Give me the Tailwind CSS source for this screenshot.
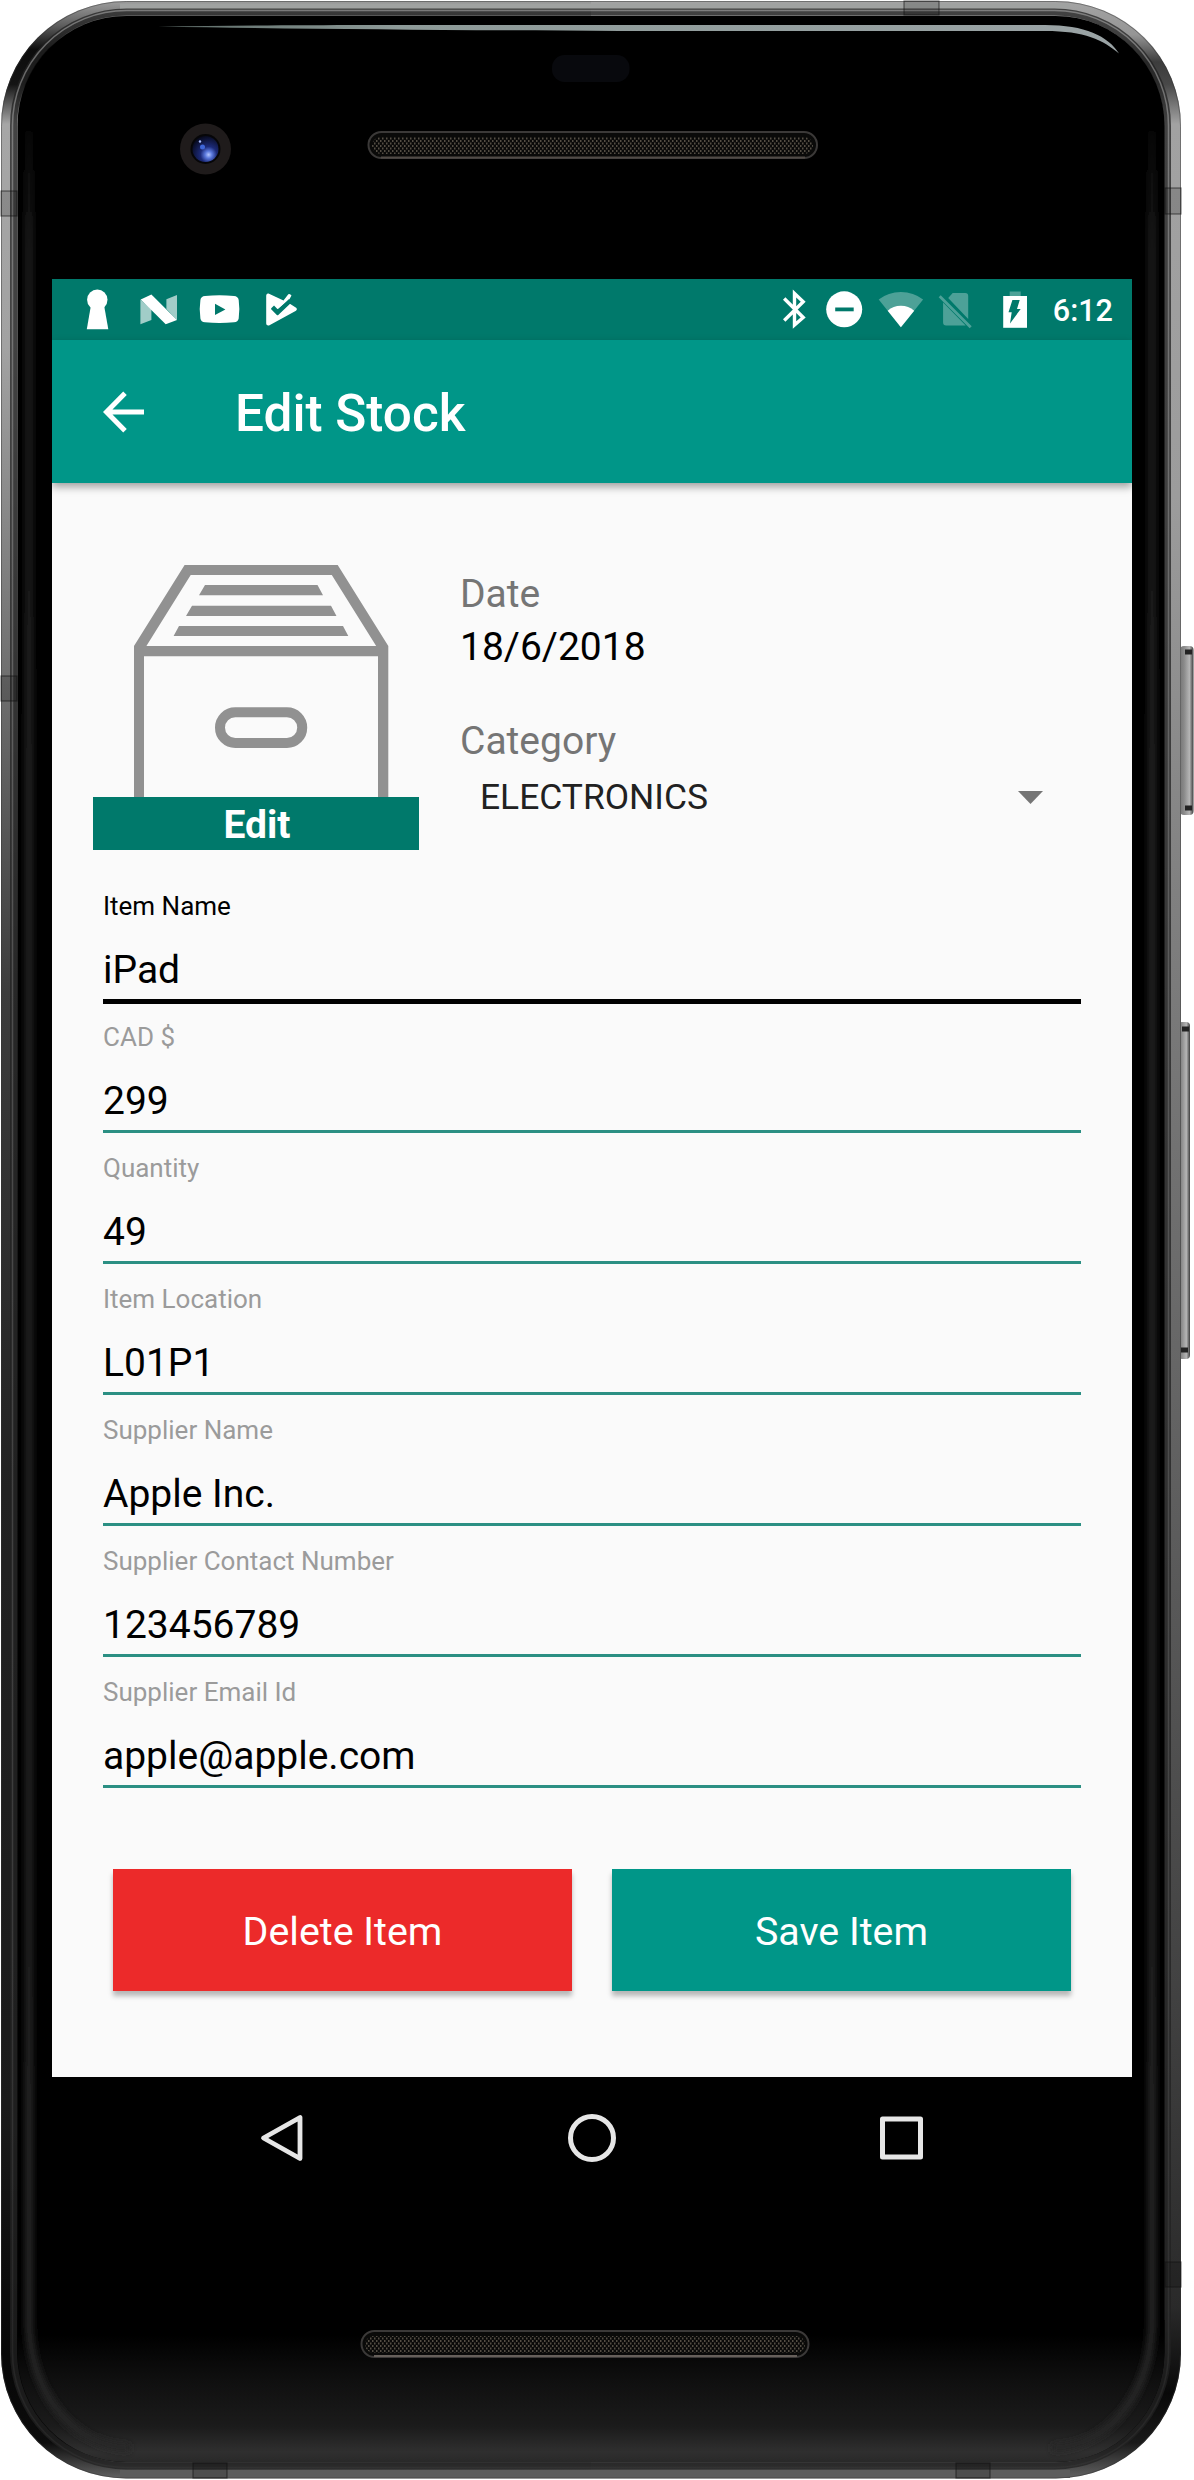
<!DOCTYPE html>
<html lang="en">
<head>
<meta charset="utf-8">
<title>Edit Stock</title>
<script src="https://cdn.jsdelivr.net/npm/@tailwindcss/browser@4"></script>
</head>
<body class="bg-white">
<div class="relative w-[1194px] h-[2480px] overflow-hidden font-[Roboto,sans-serif]">

  <!-- Handset body -->
  <svg class="absolute inset-0" width="1194" height="2480" viewBox="0 0 1194 2480" fill="none" aria-hidden="true">
    <defs>
      <linearGradient id="left" x1="0" y1="0" x2="0" y2="2480" gradientUnits="userSpaceOnUse">
        <stop offset="0" stop-color="#a0a0a0"/><stop offset=".01" stop-color="#606060"/><stop offset=".02" stop-color="#0c0c0c"/><stop offset=".034" stop-color="#141414"/><stop offset=".05" stop-color="#a6a6a6"/><stop offset=".14" stop-color="#a2a2a2"/><stop offset=".27" stop-color="#707070"/><stop offset=".4" stop-color="#3c3c3c"/><stop offset=".6" stop-color="#222"/><stop offset=".85" stop-color="#1a1a1a"/><stop offset=".95" stop-color="#060606"/><stop offset=".985" stop-color="#0c0c0c"/><stop offset="1" stop-color="#666"/>
      </linearGradient>
      <linearGradient id="right" x1="0" y1="0" x2="0" y2="2480" gradientUnits="userSpaceOnUse">
        <stop offset="0" stop-color="#a4a4a4"/><stop offset=".014" stop-color="#959595"/><stop offset=".025" stop-color="#3c3c3c"/><stop offset=".034" stop-color="#484848"/><stop offset=".05" stop-color="#a2a2a2"/><stop offset=".2" stop-color="#9c9c9c"/><stop offset=".36" stop-color="#808080"/><stop offset=".55" stop-color="#666"/><stop offset=".8" stop-color="#424242"/><stop offset=".93" stop-color="#2a2a2a"/><stop offset=".965" stop-color="#080808"/><stop offset=".985" stop-color="#1a1a1a"/><stop offset="1" stop-color="#666"/>
      </linearGradient>
      <linearGradient id="rim" x1="0" y1="0" x2="0" y2="2480" gradientUnits="userSpaceOnUse">
        <stop offset="0" stop-color="#bbb" stop-opacity=".5"/><stop offset=".4" stop-color="#999" stop-opacity=".35"/><stop offset=".8" stop-color="#777" stop-opacity=".3"/><stop offset="1" stop-color="#555" stop-opacity=".15"/>
      </linearGradient>
      <linearGradient id="glow" x1="0" y1="2335" x2="0" y2="2462" gradientUnits="userSpaceOnUse">
        <stop offset="0" stop-color="#000"/><stop offset=".35" stop-color="#0f0f0f"/><stop offset=".72" stop-color="#1b1b1b"/><stop offset=".92" stop-color="#2f2f2f"/><stop offset="1" stop-color="#292929"/>
      </linearGradient>
      <linearGradient id="edge" x1="0" y1="110" x2="0" y2="2400" gradientUnits="userSpaceOnUse">
        <stop offset="0" stop-color="#1e1e1e" stop-opacity="0"/><stop offset=".06" stop-color="#1e1e1e"/><stop offset="1" stop-color="#262626"/>
      </linearGradient>
      <linearGradient id="strip" x1="158" y1="0" x2="1119" y2="0" gradientUnits="userSpaceOnUse">
        <stop offset="0" stop-color="#5b6a66"/><stop offset=".25" stop-color="#8d9a98"/><stop offset="1" stop-color="#9aa3a5"/>
      </linearGradient>
      <linearGradient id="btn" x1="0" y1="0" x2="1" y2="0">
        <stop offset="0" stop-color="#777"/><stop offset=".3" stop-color="#8a8a8a"/><stop offset=".7" stop-color="#b5b5b5"/><stop offset="1" stop-color="#3d3d3d"/>
      </linearGradient>
      <radialGradient id="lens" cx=".62" cy=".72" r=".75">
        <stop offset="0" stop-color="#b4c6ff"/><stop offset=".18" stop-color="#5a78dc"/><stop offset=".42" stop-color="#1c2a78"/><stop offset="1" stop-color="#060818"/>
      </radialGradient>
      <pattern id="mesh" width="4" height="5" patternUnits="userSpaceOnUse">
        <rect width="4" height="5" fill="#0a0a09"/><rect x="0" y="0" width="1.5" height="2" fill="#544e44"/><rect x="2" y="2.5" width="1.5" height="2" fill="#544e44"/>
      </pattern>
      <filter id="soft" x="-10%" y="-10%" width="120%" height="120%"><feGaussianBlur stdDeviation="3"/></filter>
      <clipPath id="lh"><rect x="0" y="0" width="591" height="2480"/></clipPath>
      <clipPath id="rh"><rect x="591" y="0" width="603" height="2480"/></clipPath>
    </defs>
    <rect x="1180" y="646" width="13.5" height="169" rx="4" fill="url(#btn)"/>
    <path d="M1185 652h7M1185 808h7" stroke="#222" stroke-width="5"/>
    <rect x="1178" y="1022" width="12" height="337" rx="4" fill="url(#btn)"/>
    <path d="M1182 1029h7M1181 1350h7" stroke="#222" stroke-width="5"/>

    <rect x="1" y="1" width="1180" height="2477.500" rx="125" ry="125" fill="url(#left)" clip-path="url(#lh)"/>
    <rect x="1" y="1" width="1180" height="2477.500" rx="125" ry="125" fill="url(#right)" clip-path="url(#rh)"/>
    <path d="M120 6.500H1070" stroke="#a0a2a1" stroke-width="6"/>
    <path d="M120 2474H1070" stroke="#5c5c5c" stroke-width="8"/>
    <rect x="1.500" y="1.500" width="1179" height="2476.500" rx="125" ry="125" stroke="#333" stroke-opacity=".45"/>
    <rect x="13.500" y="12" width="1154" height="2454" rx="113" ry="114" stroke="#222" stroke-width="7" stroke-opacity=".75"/>
    <rect x="12.500" y="10.500" width="1156" height="2457" rx="114" ry="115" stroke="url(#rim)" stroke-width="1.500"/>
    <g fill="#000" fill-opacity=".16" stroke="#111" stroke-opacity=".55" stroke-width="1.200">
      <rect x="1" y="191" width="16" height="25"/><rect x="1" y="676" width="16" height="25"/>
      <rect x="1165" y="188" width="16" height="26"/><rect x="1165" y="2262" width="16" height="25"/>
      <rect x="904" y="1" width="35" height="14"/><rect x="193" y="2463" width="34" height="15"/><rect x="956" y="2463" width="34" height="15"/>
    </g>
    <rect x="17.500" y="16" width="1147" height="2446" rx="109" ry="110" fill="#000"/>
    <path d="M17.500 2320V2352A109 110 0 0 0 126.500 2462H1055.500A109 110 0 0 0 1164.500 2352V2320Z" fill="url(#glow)"/>
    <g filter="url(#soft)" stroke="url(#edge)" stroke-width="8">
      <path d="M29 110V2320C29 2390 70 2446 130 2448"/>
      <path d="M1152 110V2320C1152 2390 1112 2446 1052 2448"/>
    </g>
    <path d="M158 26.500C260 25 360 25 500 25H1045C1085 25 1108 36 1119 53.500C1103 40 1085 31 1045 31H620C450 30 300 29 158 26.500Z" fill="url(#strip)"/>
    <rect x="552" y="55" width="77.500" height="27" rx="12.500" fill="#08090d"/>
    <circle cx="205.500" cy="149" r="25.500" fill="#1f1b1b"/>
    <circle cx="205.500" cy="149" r="15" fill="#060608"/>
    <circle cx="205.500" cy="149" r="13" fill="url(#lens)"/>
    <circle cx="202.500" cy="147" r="2.500" fill="#3f66d8"/><circle cx="200" cy="141.500" r="1.200" fill="#a7bcff"/>
    <rect x="368.500" y="132" width="448.500" height="26" rx="13" fill="#0a0a09" stroke="#3b3938" stroke-width="2"/>
    <rect x="372" y="137" width="441" height="17" rx="8.500" fill="url(#mesh)"/>
    <path d="M381 157.500H805" stroke="#514b46" stroke-width="2"/>
    <rect x="361.500" y="2331" width="447" height="26" rx="13" fill="#0a0a09" stroke="#3b3938" stroke-width="2"/>
    <rect x="365" y="2336" width="440" height="17" rx="8.500" fill="url(#mesh)"/>
    <path d="M374 2356H797" stroke="#665f5a" stroke-width="2"/>
  </svg>

  <!-- Screen -->
  <main class="relative ml-[52px] mt-[279px] w-[1080px] h-[1924px] flex flex-col">
    <header class="h-[61px] shrink-0 bg-[#00796b] flex items-center justify-between">
      <svg width="260" height="61" viewBox="52 279 260 61" aria-label="Notifications">
        <g fill="#fff">
          <circle cx="97.300" cy="299.800" r="10.200"/><path d="M91 305L86.800 329.300H108.300L104 305Z"/>
          <path d="M140.400 299.500L151.400 309.500V320L140.400 324.300ZM166.400 299.300L177 295V320L166.400 309Z" opacity=".63"/>
          <path d="M140.700 299.500L151.400 294.500L177 320L165.700 324.300Z"/>
          <path d="M205 296Q219.500 294.500 234 296Q238 296.300 238.700 300Q240 309 238.700 318.500Q238 322 234 322.300Q219.500 323.600 205 322.300Q201 322 200.400 318.500Q199 309 200.400 300Q201 296.300 205 296Z"/>
          <path d="M268.500 293.600L283.500 300.500L288.300 294.300Q290 293.300 291.500 295.600L289 300L278 309H271L277 315L289.500 303.500L296.500 308Q297.500 309.500 296 310.800L269 325.500Q266.200 326 266.200 323.500V295.500Q266.500 293.200 268.500 293.600Z"/>
        </g>
        <path d="M215 303.700L225.400 309.400L215 315Z" fill="#00796b"/>
        <path d="M272.500 307L277.800 312.500L290.500 300.500" stroke="#00796b" stroke-width="4.200" fill="none"/>
      </svg>
      <div class="flex items-center pr-[19px]">
        <svg width="272" height="61" viewBox="781.300 279 272 61" fill="none" aria-label="System status">
          <path d="M784.500 298.500L803.500 317.500L794.800 325V293.500L803.500 301.800L784.500 320.500" stroke="#fff" stroke-width="3.400"/>
          <circle cx="844.500" cy="309.300" r="18" fill="#fff"/><path d="M835.500 309.400H854" stroke="#00796b" stroke-width="3.800"/>
          <path d="M901.200 327.300L879 299.600Q888.500 292 901.200 292T923.400 299.600Z" fill="#fff" opacity=".3"/>
          <path d="M901.200 327.300L888 310.800Q893.500 305.700 901.200 305.700T914.500 310.800Z" fill="#fff"/>
          <g opacity=".3"><path d="M953 293H965.500Q968.500 293 968.500 296V319L948.500 298ZM943.400 302.500L966 325.500H946.400Q943.400 325.500 943.400 322.500Z" fill="#fff"/><path d="M940 296.200L971 327.300" stroke="#fff" stroke-width="2.800"/></g>
          <path d="M1010 291.500H1021V296H1010Z" fill="#fff" opacity=".3"/><path d="M1003.500 296H1027.300V327.800H1003.500Z" fill="#fff"/>
          <path d="M1012.700 300H1020L1017.300 309H1021L1010.300 323.500L1012 312.300H1008.800Z" fill="#00796b"/>
        </svg>
        <span class="text-[30.600px] leading-[61px] pt-px font-medium text-white">6:12</span>
      </div>
    </header>

    <div class="relative h-[143px] shrink-0 bg-[#009688] shadow-[0_4px_8px_rgba(0,0,0,0.36)] flex items-center pl-[51px] gap-[90px]">
      <svg width="42" height="42" viewBox="0 0 42 42" fill="none" stroke="#fff" stroke-width="5" aria-label="Back"><path d="M41 21H4M22 2.300L3.500 21L22 39.700"/></svg>
      <h1 class="text-[51.300px] leading-[60px] pt-[5px] font-medium text-white">Edit Stock</h1>
    </div>

    <section class="grow bg-[#fafafa] flex flex-col">
      <div class="h-[388px] shrink-0 flex pl-[41px]">
        <div class="w-[326px] mt-[72px] flex flex-col">
          <svg width="326" height="242" viewBox="93 555 326 242" aria-label="Stock box">
            <g fill="#919191" fill-rule="evenodd">
              <path d="M184.600 565H337.700L388.300 646V797H378V656.300H144V797H134V646ZM190.700 575L146.400 646H376.200L331.800 575Z"/>
              <path d="M205 585H317.500L323 595.300H199ZM192 605.700H331L336.500 616H186ZM179 626H343L348.300 636H173.600Z"/>
            </g>
            <rect x="220" y="712.300" width="82.200" height="30.700" rx="15.300" fill="none" stroke="#919191" stroke-width="10"/>
          </svg>
          <div class="h-[53px] bg-[#00796b] text-white text-[39px] font-bold leading-[57px] text-center pl-[2px]">Edit</div>
        </div>
        <div class="ml-[41px] w-[600px] pt-[87px] text-[39px] leading-[48px] text-[#757575]">
          <div>Date</div>
          <div class="mt-[5px] text-black">18/6/2018</div>
          <div class="mt-[46px]">Category</div>
          <div class="mt-[10px] pl-[20px] pr-[17px] flex items-center justify-between text-[35.400px] leading-[44px] text-[#212121]">
            <span>ELECTRONICS</span>
            <svg width="25" height="13" viewBox="0 0 25 13"><path d="M0 0H25L12.500 13Z" fill="#757575"/></svg>
          </div>
        </div>
      </div>

      <div class="px-[51px] flex flex-col text-[26px] text-[#9b9b9b]">
        <div class="relative h-[131px] pt-[19px]"><div class="leading-8 text-black">Item Name</div><div class="mt-6 text-[39px] leading-[48px] text-black">iPad</div><div class="absolute inset-x-0 top-[128px] h-[5px] bg-black"></div></div>
        <div class="h-[131px] pt-[19px] border-b-[3px] border-[#2b8f83]"><div class="leading-8">CAD $</div><div class="mt-6 text-[39px] leading-[48px] text-black">299</div></div>
        <div class="h-[131px] pt-[19px] border-b-[3px] border-[#2b8f83]"><div class="leading-8">Quantity</div><div class="mt-6 text-[39px] leading-[48px] text-black">49</div></div>
        <div class="h-[131px] pt-[19px] border-b-[3px] border-[#2b8f83]"><div class="leading-8">Item Location</div><div class="mt-6 text-[39px] leading-[48px] text-black">L01P1</div></div>
        <div class="h-[131px] pt-[19px] border-b-[3px] border-[#2b8f83]"><div class="leading-8">Supplier Name</div><div class="mt-6 text-[39px] leading-[48px] text-black">Apple Inc.</div></div>
        <div class="h-[131px] pt-[19px] border-b-[3px] border-[#2b8f83]"><div class="leading-8">Supplier Contact Number</div><div class="mt-6 text-[39px] leading-[48px] text-black">123456789</div></div>
        <div class="h-[131px] pt-[19px] border-b-[3px] border-[#2b8f83]"><div class="leading-8">Supplier Email Id</div><div class="mt-6 text-[39px] leading-[48px] text-black">apple@apple.com</div></div>
      </div>

      <div class="mt-[81px] px-[61px] flex gap-[40px] text-[39.400px] text-white">
        <button class="h-[122px] flex-1 bg-[#ec2a2a] pt-[3px] shadow-[0_5px_5px_rgba(0,0,0,0.27)]">Delete Item</button>
        <button class="h-[122px] flex-1 bg-[#009688] pt-[3px] shadow-[0_5px_5px_rgba(0,0,0,0.27)]">Save Item</button>
      </div>
    </section>

    <nav class="h-[126px] shrink-0 bg-black flex items-center justify-between pl-[207px] pr-[207px] pb-[2px]">
      <svg width="46" height="50" viewBox="0 0 46 50" fill="none" stroke="#e6e6e6" stroke-width="4.800" stroke-linejoin="round" aria-label="Back"><path d="M41 3.500V44.500L4.500 24Z"/></svg>
      <svg width="50" height="50" viewBox="0 0 50 50" fill="none" stroke="#e6e6e6" stroke-width="5" aria-label="Home"><circle cx="25" cy="24" r="21.500"/></svg>
      <svg width="46" height="50" viewBox="0 0 46 50" fill="none" stroke="#e6e6e6" stroke-width="5" stroke-linejoin="round" aria-label="Recents"><rect x="3.500" y="5" width="38" height="38"/></svg>
    </nav>
  </main>
</div>
</body>
</html>
